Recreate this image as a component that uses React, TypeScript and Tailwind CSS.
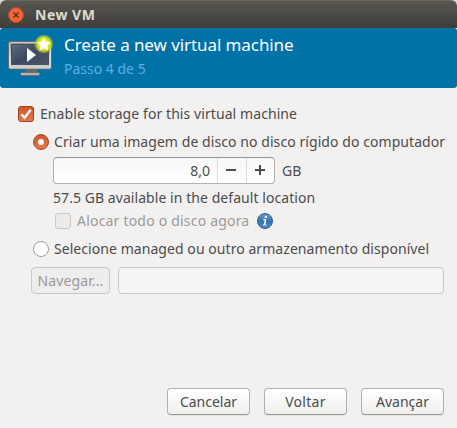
import type { ReactNode } from 'react';

function MonitorIcon() {
  return (
    <svg width="48" height="44" viewBox="0 0 48 44" className="mt-px shrink-0">
      <defs>
        <linearGradient id="frame" x1="0" y1="0" x2="0" y2="1">
          <stop offset="0" stopColor="#8d8f8c" />
          <stop offset="0.7" stopColor="#e0e1df" />
          <stop offset="1" stopColor="#c3c5c2" />
        </linearGradient>
        <linearGradient id="screen" x1="0" y1="0" x2="1" y2="1">
          <stop offset="0" stopColor="#5d6a80" />
          <stop offset="0.5" stopColor="#3f4a5e" />
          <stop offset="1" stopColor="#4b566b" />
        </linearGradient>
        <radialGradient id="glow">
          <stop offset="0.45" stopColor="#e9f012" />
          <stop offset="0.7" stopColor="#d3e01c" stopOpacity="0.9" />
          <stop offset="1" stopColor="#b5cc30" stopOpacity="0" />
        </radialGradient>
      </defs>
      <path d="M17 34h12v4H17z" fill="#666865" />
      <rect x="12.5" y="37.500" width="19" height="3" rx="1" fill="#b4b5b3" stroke="#6f716e" />
      <rect x="0.5" y="6.500" width="43" height="27.500" rx="1.500" fill="url(#frame)" stroke="#666b70" />
      <rect x="1.500" y="7.500" width="41" height="25.500" rx="1" fill="none" stroke="#d9dad8" strokeWidth="0.8" />
      <rect x="3.500" y="9.500" width="37" height="20" fill="url(#screen)" stroke="#465062" />
      <path d="M19 13v14l9-7z" fill="#fff" />
      <circle cx="35.800" cy="9" r="10" fill="url(#glow)" />
      <path transform="translate(0 .3)" d="M35.800 2.500l2 4.200 4.500.5-3.300 3.100.9 4.600-4.100-2.200-4.100 2.200.9-4.600-3.300-3.100 4.500-.5z" fill="#fff" stroke="#fff" strokeWidth="0.5" strokeLinejoin="round" />
    </svg>
  );
}

function CheckedBox() {
  return (
    <svg width="16" height="16" viewBox="0 0 16 16" className="shrink-0">
      <defs>
        <linearGradient id="orange" x1="0" y1="0" x2="0" y2="1">
          <stop offset="0" stopColor="#cf5428" />
          <stop offset="1" stopColor="#e67b52" />
        </linearGradient>
      </defs>
      <rect x="0.5" y="0.5" width="15" height="15" rx="2.500" fill="url(#orange)" stroke="#9a4525" />
      <path d="M3.300 8.300l3.200 3.500 6.300-8" fill="none" stroke="#fff" strokeWidth="2.300" />
    </svg>
  );
}

function SelectedRadio() {
  return (
    <svg width="16" height="16" viewBox="0 0 16 16" className="shrink-0">
      <circle cx="8" cy="8" r="7.500" fill="url(#orange)" stroke="#a04a2a" />
      <circle cx="8" cy="8" r="2.900" fill="#fff" />
    </svg>
  );
}

function InfoIcon() {
  return (
    <svg width="16" height="16" viewBox="0 0 16 16" className="shrink-0">
      <defs>
        <linearGradient id="info" x1="0" y1="0" x2="0" y2="1">
          <stop offset="0" stopColor="#6a9dcb" />
          <stop offset="0.5" stopColor="#3873ad" />
          <stop offset="1" stopColor="#4a8bc5" />
        </linearGradient>
      </defs>
      <circle cx="8" cy="8" r="7.500" fill="url(#info)" stroke="#2b6191" />
      <circle cx="8.900" cy="3.900" r="1.200" fill="#fff" />
      <path d="M6.200 6.700h2.600M6 11.900h3.200" fill="none" stroke="#fff" strokeWidth="1" />
      <path d="M8.600 6.300L7.500 12.200" stroke="#fff" strokeWidth="1.600" />
    </svg>
  );
}

function DialogButton({ children }: { children: ReactNode }) {
  return (
    <button className="flex h-[27px] w-[83px] items-center justify-center rounded-[4px] border border-[#b3b1ae] border-b-[#979592] bg-linear-to-b from-white to-[#f0efee] shadow-[0_1px_0_#e6e5e3]">
      {children}
    </button>
  );
}

export default function App() {
  return (
    <div className="h-[428px] w-[457px] bg-[#d9d9d8] font-['Noto_Sans',sans-serif] text-[14px] leading-[20px] whitespace-nowrap text-[#4c4c4c]">
      <div className="flex h-full flex-col overflow-hidden rounded-t-[6px] bg-[#f2f1f0]">
        <div className="flex h-[28px] shrink-0 items-center border-t border-[#6b685f] bg-linear-to-b from-[#595750] to-[#3e3d38] pl-[8px]">
          <svg width="16" height="16" viewBox="0 0 16 16">
            <circle cx="8" cy="8" r="7.500" fill="#ec6338" stroke="#b54a28" />
            <path d="M5.500 5.500l5 5m0-5l-5 5" stroke="#55301f" strokeWidth="1.300" />
          </svg>
          <span className="ml-[11px] text-[14px] font-bold tracking-[0.5px] text-[#dfdbd2]">New VM</span>
        </div>

        <div className="h-[60px] shrink-0 bg-white">
          <div className="flex h-full rounded-[3px] bg-[#0072a8] pt-[6px] pl-[8px]">
            <MonitorIcon />
            <div className="ml-[8px]">
              <h1 className="text-[17px] leading-[22px] tracking-[-0.08px] text-white">Create a new virtual machine</h1>
              <p className="mt-[3px] text-[#5ab0e2]">Passo 4 de 5</p>
            </div>
          </div>
        </div>

        <div className="flex grow flex-col pt-[16px] pr-[13px] pb-[13px]">
          <label className="flex h-[20px] items-center gap-[6px] pl-[18px]">
            <CheckedBox />
            <span className="tracking-[0.08px]">Enable storage for this virtual machine</span>
          </label>
          <label className="mt-[8px] flex h-[20px] items-center gap-[5px] pl-[33px]">
            <SelectedRadio />
            <span className="tracking-[0.07px]">Criar uma imagem de disco no disco rígido do computador</span>
          </label>
          <div className="mt-[5px] flex h-[27px] items-center pl-[53px]">
            <div className="flex h-[27px] w-[222px] overflow-hidden rounded-[4px] border border-[#b3b1ae] border-t-[#979592] bg-linear-to-b from-[#f7f7f7] to-white">
              <span className="flex grow items-center justify-end border-r border-[#dddcda] pr-[7px]">8,0</span>
              <span className="flex w-[29px] items-center justify-center border-r border-[#dddcda] pr-[2px] pb-[2px]">
                <svg width="10" height="10"><path d="M0 4h10v2H0z" fill="#4c4c4c" /></svg>
              </span>
              <span className="flex w-[27px] items-center justify-center pr-[1px] pb-[2px]">
                <svg width="10" height="10"><path d="M0 4h10v2H0zM4 0h2v10H4z" fill="#4c4c4c" /></svg>
              </span>
            </div>
            <span className="ml-[7px]">GB</span>
          </div>
          <p className="mt-[4px] h-[20px] pl-[53px] tracking-[0.06px]">57.5 GB available in the default location</p>
          <label className="mt-[3px] flex h-[20px] items-center pl-[55px] text-[#9b9a98]">
            <span className="h-[16px] w-[16px] shrink-0 rounded-[3px] border border-[#c9c8c6] bg-[#ecebea]" />
            <span className="mr-[8px] ml-[6px] tracking-[0.2px]">Alocar todo o disco agora</span>
            <InfoIcon />
          </label>
          <label className="mt-[8px] flex h-[20px] items-center gap-[5px] pl-[33px]">
            <span className="h-[16px] w-[16px] shrink-0 rounded-full border border-[#a09e9b] bg-white" />
            <span className="tracking-[0.06px]">Selecione managed ou outro armazenamento disponível</span>
          </label>
          <div className="mt-[8px] flex h-[27px] gap-[8px] pl-[31px]">
            <button className="w-[79px] rounded-[4px] border border-[#c9c8c6] bg-[#eeedec] tracking-[0.1px] text-[#9b9a98]">Navegar...</button>
            <div className="grow rounded-[4px] border border-[#c9c8c6] bg-[#f5f5f5]" />
          </div>
          <div className="mt-auto flex justify-end gap-[14px]">
            <DialogButton>Cancelar</DialogButton>
            <DialogButton><span className="tracking-[0.3px]">Voltar</span></DialogButton>
            <DialogButton>Avançar</DialogButton>
          </div>
        </div>
      </div>
    </div>
  );
}
